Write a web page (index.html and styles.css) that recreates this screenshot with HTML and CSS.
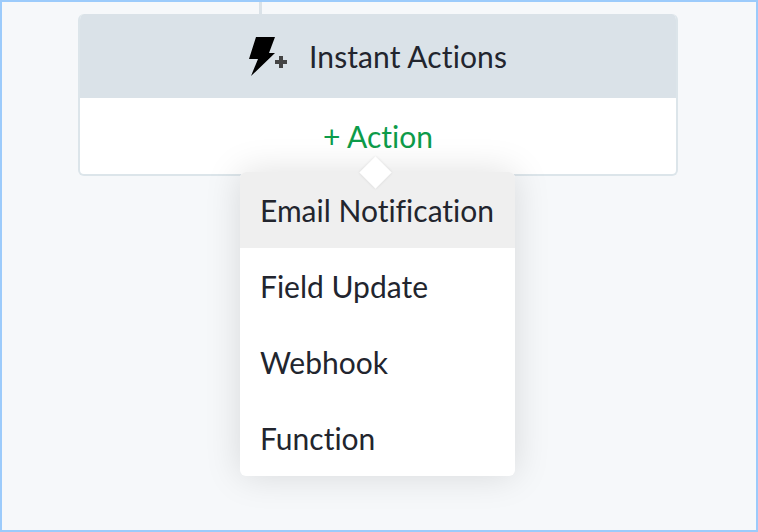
FILE: index.html
```html
<!DOCTYPE html>
<html lang="en">
<head>
    <meta charset="UTF-8">
    <meta name="viewport" content="width=device-width, initial-scale=1.0">
    <title>Instant Actions</title>
    <link rel="stylesheet" href="styles.css">
</head>
<body>
    <main class="canvas">
        <div class="connector"></div>
        <section class="action-card">
            <header class="card-header">
                <svg class="bolt-icon" width="38" height="40" viewBox="0 0 38 40">
                    <path fill="#000" d="M7 1H26L20 17H26L2 40L9 23H0Z"/>
                    <path fill="#444" d="M30 20H34V24H38V28H34V32H30V28H26V24H30Z"/>
                </svg>
                <h2>Instant Actions</h2>
            </header>
            <div class="card-body">
                <a class="add-action" href="#">+ Action</a>
            </div>
        </section>
        <div class="menu">
            <ul class="menu-list">
                <li class="menu-item active">Email Notification</li>
                <li class="menu-item">Field Update</li>
                <li class="menu-item">Webhook</li>
                <li class="menu-item">Function</li>
            </ul>
            <span class="menu-arrow"></span>
        </div>
    </main>
</body>
</html>
```

FILE: styles.css
```css
* {
    box-sizing: border-box;
}
html, body {
    margin: 0;
    padding: 0;
}
body {
    font-family: Lato, "Open Sans", sans-serif;
    font-variant-ligatures: none;
    color: #22252e;
}
.canvas {
    position: relative;
    width: 758px;
    height: 532px;
    overflow: hidden;
    background-color: #f6f8fa;
    border: 2px solid #9ccbfb;
}
.connector {
    width: 3px;
    height: 12px;
    margin-left: 257px;
    background-color: #dae2e8;
}
.action-card {
    width: 600px;
    height: 162px;
    margin-left: 76px;
    background: #fff;
    border: 2px solid #dce5ea;
    border-top: none;
    border-radius: 6px;
    overflow: hidden;
}
.card-header {
    display: flex;
    align-items: center;
    justify-content: center;
    gap: 22px;
    height: 84px;
    margin: 0 -2px;
    background-color: #dae2e8;
}
.card-header h2 {
    margin: 0;
    font-size: 30px;
    font-weight: 400;
    letter-spacing: 0.1px;
}
.bolt-icon {
    display: block;
}
.card-body {
    text-align: center;
    padding-top: 19px;
}
.add-action {
    color: #0d9b4a;
    font-size: 30px;
    line-height: 38px;
    text-decoration: none;
}
.menu {
    position: absolute;
    left: 238px;
    top: 170px;
    width: 275px;
    background: #fff;
    border-radius: 6px;
    box-shadow: 0 0 36px rgba(0, 0, 0, 0.13);
}
.menu-arrow {
    position: absolute;
    left: 124px;
    top: -11px;
    width: 23px;
    height: 23px;
    background: #fff;
    transform: rotate(45deg);
    box-shadow: 0 0 3px rgba(0, 0, 0, 0.1);
}
.menu-list {
    list-style: none;
    margin: 0;
    padding: 0;
    overflow: hidden;
    border-radius: 6px;
}
.menu-item {
    height: 76px;
    padding: 0 20px;
    font-size: 30px;
    line-height: 76px;
    white-space: nowrap;
}
.menu-item.active {
    background-color: #efefef;
}
```
